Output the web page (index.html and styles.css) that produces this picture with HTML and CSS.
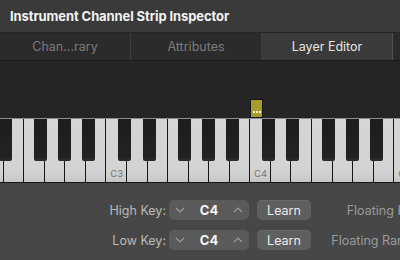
FILE: index.html
```html
<!DOCTYPE html>
<html lang="en">

<head>
    <meta charset="UTF-8">
    <meta name="viewport" content="width=device-width, initial-scale=1.0">
    <title>Instrument Channel Strip Inspector</title>
    <link rel="stylesheet" href="styles.css">
</head>

<body>
    <div class="inspector">
        <div class="titlebar">Instrument Channel Strip Inspector</div>

        <div class="tabs">
            <div class="tab">Chan...rary</div>
            <div class="tab">Attributes</div>
            <div class="tab active">Layer Editor</div>
            <div class="tab rest"></div>
        </div>

        <div class="layer-area">
            <div class="layer-marker"><span></span><span></span><span></span></div>
        </div>

        <div class="keyboard">
            <div class="key"><i class="black ds"></i></div>
            <div class="key"></div>
            <div class="key"><i class="black fs"></i></div>
            <div class="key"><i class="black gs"></i></div>
            <div class="key"><i class="black as"></i></div>
            <div class="key"></div>
            <div class="key"><i class="black cs"></i><span class="note">C3</span></div>
            <div class="key"><i class="black ds"></i></div>
            <div class="key"></div>
            <div class="key"><i class="black fs"></i></div>
            <div class="key"><i class="black gs"></i></div>
            <div class="key"><i class="black as"></i></div>
            <div class="key"></div>
            <div class="key"><i class="black cs"></i><span class="note">C4</span></div>
            <div class="key"><i class="black ds"></i></div>
            <div class="key"></div>
            <div class="key"><i class="black fs"></i></div>
            <div class="key"><i class="black gs"></i></div>
            <div class="key"><i class="black as"></i></div>
            <div class="key"></div>
            <div class="key"><span class="note">C5</span></div>
        </div>

        <div class="controls">
            <div class="row">
                <label class="label">High Key:</label>
                <div class="stepper">
                    <svg width="10" height="6" viewBox="0 0 10 6"><path d="M1 1 L5 5 L9 1" /></svg>
                    <span class="value">C4</span>
                    <svg width="10" height="6" viewBox="0 0 10 6"><path d="M1 5 L5 1 L9 5" /></svg>
                </div>
                <button class="learn">Learn</button>
                <span class="side-label">Floating Key:</span>
            </div>
            <div class="row">
                <label class="label">Low Key:</label>
                <div class="stepper">
                    <svg width="10" height="6" viewBox="0 0 10 6"><path d="M1 1 L5 5 L9 1" /></svg>
                    <span class="value">C4</span>
                    <svg width="10" height="6" viewBox="0 0 10 6"><path d="M1 5 L5 1 L9 5" /></svg>
                </div>
                <button class="learn">Learn</button>
                <span class="side-label">Floating Range:</span>
            </div>
        </div>
    </div>
</body>

</html>
```

FILE: styles.css
```css
body {
    margin: 0;
    width: 400px;
    height: 260px;
    overflow: hidden;
    background-color: #474747;
    font-family: 'Inter', 'Noto Sans', sans-serif;
}

.inspector {
    width: 400px;
    overflow: hidden;
}

.titlebar {
    height: 32px;
    display: flex;
    align-items: center;
    padding-left: 10px;
    background-color: #3a3a3a;
    color: #f2f2f2;
    font-size: 13px;
    font-weight: 700;
    letter-spacing: -0.1px;
}

.tabs {
    display: flex;
    height: 28px;
    background-color: #2b2b2b;
    border-top: 1px solid #262626;
    box-sizing: border-box;
}

.tab {
    width: 130px;
    flex-shrink: 0;
    display: flex;
    align-items: center;
    justify-content: center;
    border-right: 1px solid #3d3d3d;
    color: #7b7b7b;
    font-size: 12.5px;
}

.tab.active {
    background-color: #3a3a3a;
    color: #e6e6e6;
    border-right-color: #505050;
}

.tab.rest {
    width: auto;
    flex: 1;
    border-right: none;
}

.layer-area {
    position: relative;
    height: 59px;
    border-top: 1px solid #1d1d1d;
    border-bottom: 1px solid #8c8c8c;
    box-sizing: border-box;
    background-color: #252525;
    background-image: repeating-linear-gradient(90deg, #272727 0, #272727 1px, transparent 1px, transparent 12px);
    background-position: 10px 0;
}

.layer-marker {
    position: absolute;
    left: 250px;
    top: 38px;
    width: 13px;
    height: 19px;
    box-sizing: border-box;
    background-color: #a79c2b;
    border: 1px solid #141414;
    display: flex;
    justify-content: center;
    align-items: flex-end;
    gap: 1px;
    padding-bottom: 4px;
}

.layer-marker span {
    width: 2px;
    height: 2px;
    background-color: #f4f0d0;
}

.keyboard {
    display: flex;
    height: 64px;
    margin-left: -18px;
    border-bottom: 1px solid #111;
    box-sizing: border-box;
}

.key {
    position: relative;
    width: 20.571px;
    flex-shrink: 0;
    box-sizing: border-box;
    border-left: 1px solid #161616;
    background: linear-gradient(#d5d5d5, #d3d3d3 82%, #c6c6c6);
    display: flex;
    align-items: flex-end;
    justify-content: center;
}

.black {
    position: absolute;
    top: 0;
    z-index: 2;
    width: 13px;
    height: 42px;
    background: linear-gradient(#1d1d1d, #222 90%, #2c2c2c);
    border-radius: 0 0 2px 2px;
}

.black.cs { left: calc(100% - 8px); }
.black.ds { left: calc(100% - 4px); }
.black.fs { left: calc(100% - 10px); }
.black.gs { left: calc(100% - 6px); }
.black.as { left: calc(100% - 3px); }

.note {
    font-size: 9.5px;
    color: #767676;
    margin-bottom: 3px;
    padding-left: 1px;
}

.controls {
    padding: 17px 0 0 8px;
    display: flex;
    flex-direction: column;
    gap: 10px;
}

.row {
    display: flex;
    align-items: center;
    height: 20px;
    white-space: nowrap;
}

.row > * {
    flex-shrink: 0;
}

.label {
    width: 158px;
    margin-right: 3px;
    text-align: right;
    color: #b9b9b9;
    font-size: 12.5px;
}

.stepper {
    width: 80px;
    height: 20px;
    box-sizing: border-box;
    padding: 0 6px;
    display: flex;
    align-items: center;
    justify-content: space-between;
    background-color: #5a5a5a;
    border-radius: 5px;
}

.stepper svg path {
    fill: none;
    stroke: #9c9c9c;
    stroke-width: 1.2;
}

.value {
    color: #f5f5f5;
    font-size: 13px;
    font-weight: 700;
}

.learn {
    width: 54px;
    height: 20px;
    margin-left: 8px;
    padding: 0;
    border: none;
    border-radius: 5px;
    background-color: #5f5f5f;
    box-shadow: inset 0 1px 0 #686868;
    color: #ececec;
    font-family: inherit;
    font-size: 12.5px;
}

.side-label {
    width: 112px;
    text-align: right;
    color: #9b9b9b;
    font-size: 12.5px;
}
```
